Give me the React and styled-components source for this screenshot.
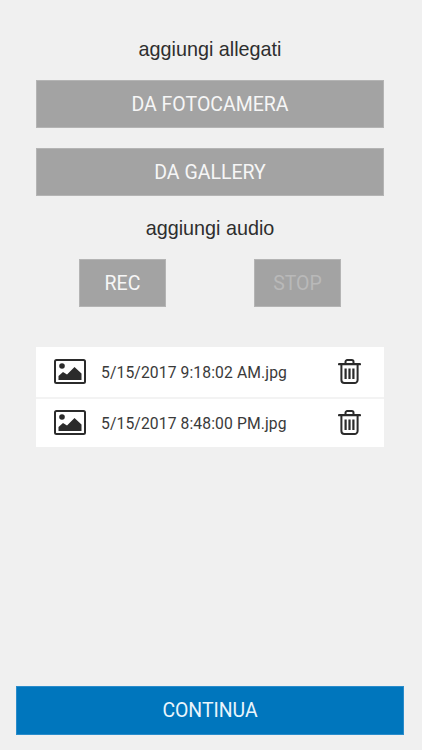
import React from "react";
import styled, { createGlobalStyle } from "styled-components";

const Global = createGlobalStyle`
  html, body { margin: 0; padding: 0; background: #f0f0f0; }
  * { box-sizing: border-box; }
`;

const Screen = styled.div`
  width: 422px;
  height: 750px;
  overflow: hidden;
  background: #f0f0f0;
  display: flex;
  flex-direction: column;
  padding: 36px 18px 15px 16px;
  font-family: Roboto, sans-serif;
`;

const Content = styled.div`
  flex: 1;
  padding: 0 20px;
  display: flex;
  flex-direction: column;
`;

const Heading = styled.h2`
  margin: ${(p) => p.$mt || 0}px 0 ${(p) => p.$mb || 0}px;
  height: 26px;
  line-height: 26px;
  font-family: "Liberation Sans", Arial, sans-serif;
  font-size: 19.8px;
  font-weight: 400;
  color: #2e2e2e;
  text-align: center;
`;

const GreyButton = styled.button`
  display: block;
  width: ${(p) => p.$w || "100%"};
  height: 48px;
  margin: 0;
  padding: 0;
  border: 1px solid #b4b4b4;
  border-radius: 0;
  background: #a3a3a3;
  color: ${(p) => (p.disabled ? "#b9b9b9" : "#f6f6f6")};
  font-family: Roboto, sans-serif;
  font-size: 19.5px;
  font-weight: 400;
  text-align: center;
`;

const Stack = styled.div`
  display: flex;
  flex-direction: column;
  gap: 20px;
`;

const AudioRow = styled.div`
  display: flex;
  justify-content: space-between;
  padding: 0 43px;
  margin-top: 18px;
`;

const FileList = styled.ul`
  list-style: none;
  margin: 40px 0 0;
  padding: 0;
  background: #fff;
`;

const FileRow = styled.li`
  height: 50px;
  display: flex;
  align-items: center;
  padding: 0 23px 1px 18px;
  & + & {
    border-top: 2px solid #f3f3f3;
  }
`;

const FileName = styled.span`
  flex: 1;
  margin-left: 15px;
  padding-top: 2px;
  font-size: 15.7px;
  letter-spacing: 0.1px;
  color: #3a3a3a;
`;

const Continue = styled.button`
  display: block;
  width: 388px;
  height: 49px;
  padding: 0;
  border: 1px solid #2a8ccb;
  border-radius: 0;
  background: #0076bd;
  color: #eaf5fc;
  font-family: Roboto, sans-serif;
  font-size: 19.4px;
  font-weight: 400;
  text-align: center;
`;

const PictureIcon = () => (
  <svg width="32" height="25" viewBox="0 0 32 25" fill="none" aria-hidden="true">
    <rect x="1" y="1" width="30" height="23" rx="1.5" stroke="#2b2b2b" strokeWidth="2" />
    <circle cx="8" cy="7" r="2.8" fill="#2b2b2b" />
    <path d="M4.5 21V17L9 13L13 15.5L20.5 8L27.5 14.5V21Z" fill="#2b2b2b" />
  </svg>
);

const TrashIcon = () => (
  <svg width="23" height="25" viewBox="0 0 23 25" fill="none" stroke="#2b2b2b" aria-hidden="true">
    <path d="M1 5.2H22" strokeWidth="2.2" strokeLinecap="round" />
    <path d="M7.5 5V2.8A1.7 1.7 0 0 1 9.2 1.1H13.8A1.7 1.7 0 0 1 15.5 2.8V5" strokeWidth="2" />
    <path d="M3.4 5.5V21A3 3 0 0 0 6.4 24H16.6A3 3 0 0 0 19.6 21V5.5" strokeWidth="2" />
    <path d="M7.6 9.5V20M11.5 9.5V20M15.4 9.5V20" strokeWidth="2.2" />
  </svg>
);

const files = ["5/15/2017 9:18:02 AM.jpg", "5/15/2017 8:48:00 PM.jpg"];

export default function App() {
  return (
    <Screen>
      <Global />
      <Content>
        <Heading $mb={18}>aggiungi allegati</Heading>
        <Stack>
          <GreyButton>DA FOTOCAMERA</GreyButton>
          <GreyButton>DA GALLERY</GreyButton>
        </Stack>
        <Heading $mt={19}>aggiungi audio</Heading>
        <AudioRow>
          <GreyButton $w="87px">REC</GreyButton>
          <GreyButton $w="87px" disabled>STOP</GreyButton>
        </AudioRow>
        <FileList>
          {files.map((f) => (
            <FileRow key={f}>
              <PictureIcon />
              <FileName>{f}</FileName>
              <TrashIcon />
            </FileRow>
          ))}
        </FileList>
      </Content>
      <Continue>CONTINUA</Continue>
    </Screen>
  );
}
